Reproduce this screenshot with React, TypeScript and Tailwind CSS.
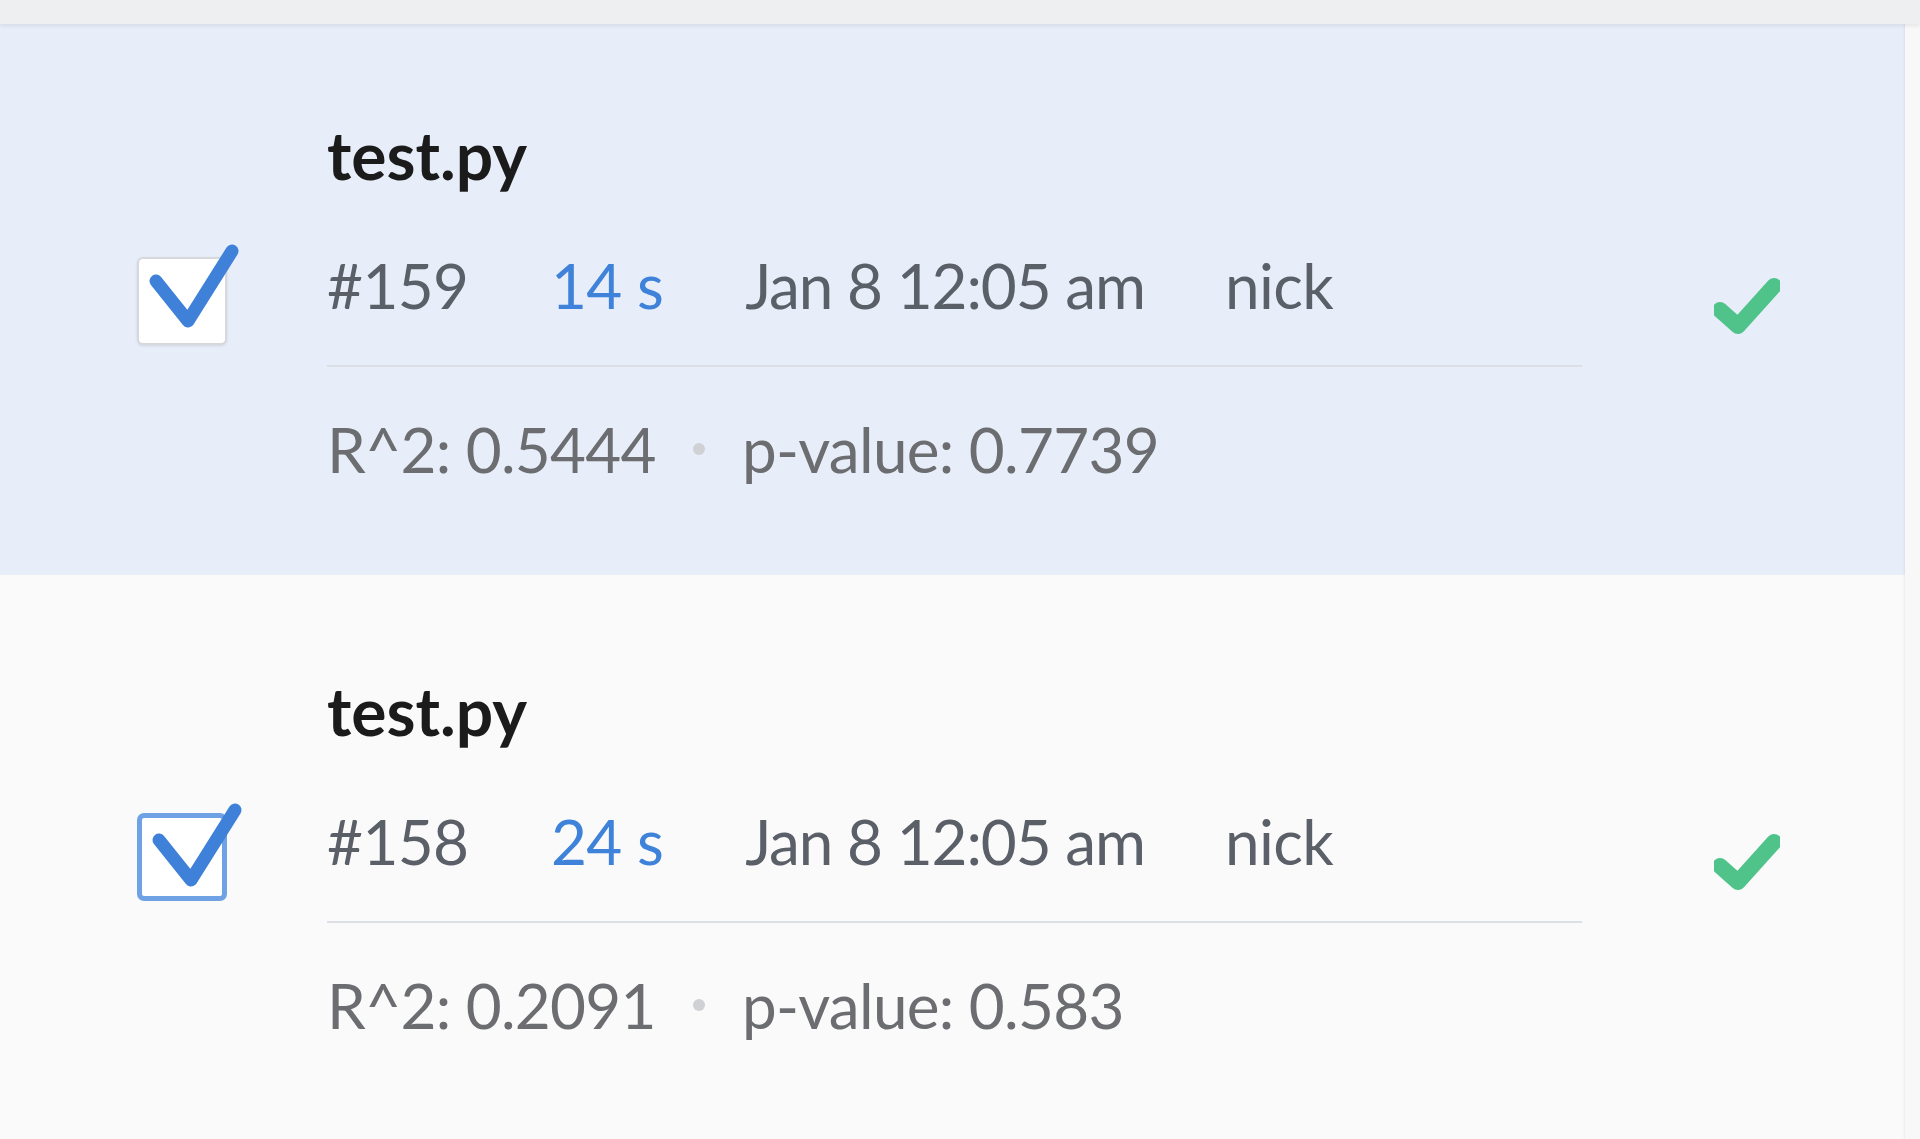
import React from 'react';

type Run = {
  file: string;
  num: number;
  duration: string;
  date: string;
  user: string;
  r2: string;
  pValue: string;
  selected: boolean;
};

const runs: Run[] = [
  { file: 'test.py', num: 159, duration: '14 s', date: 'Jan 8 12:05 am', user: 'nick', r2: '0.5444', pValue: '0.7739', selected: true },
  { file: 'test.py', num: 158, duration: '24 s', date: 'Jan 8 12:05 am', user: 'nick', r2: '0.2091', pValue: '0.583', selected: false },
];

function CheckBox({ active }: { active: boolean }) {
  return (
    <div
      className={
        active
          ? 'relative w-[90px] h-[88px] rounded-[6px] bg-white border-2 border-[#d6d8dc] shadow-[0_1px_3px_rgba(0,0,0,0.1)]'
          : 'relative w-[90px] h-[88px] rounded-[7px] bg-white border-[5px] border-[#6ea2e4]'
      }
    >
      <svg
        className="absolute -left-[2px] -top-[2px] overflow-visible"
        width="88"
        height="88"
        viewBox="0 0 88 88"
        fill="none"
      >
        <polyline
          points="19,24 51,64 95,-6"
          stroke="#3f80d8"
          strokeWidth="13"
          strokeLinecap="round"
          strokeLinejoin="round"
        />
      </svg>
    </div>
  );
}

function GreenCheck() {
  return (
    <svg width="66" height="58" viewBox="0 0 66 58" fill="none">
      <polyline
        points="6,33 24,49 60,9"
        stroke="#4fc38a"
        strokeWidth="16"
        strokeLinecap="round"
        strokeLinejoin="round"
      />
    </svg>
  );
}

function RunRow({ run, first }: { run: Run; first: boolean }) {
  return (
    <div
      className={
        (first ? 'bg-[#e8eef9] pt-[98px] pb-[95px]' : 'bg-[#fafafa] pt-[103px] pb-[95px]') +
        ' grid grid-cols-[90px_1255px_1fr] gap-x-[100px] pl-[137px]'
      }
    >
      {/* title */}
      <div />
      <div className="text-[66px] leading-[66px] font-bold text-[#1b1b1b]">{run.file}</div>
      <div />

      {/* meta */}
      <div className="self-start mt-[69px]">
        <CheckBox active={run.selected} />
      </div>
      <div className="mt-[37px] flex items-center text-[62px] leading-[62px] text-[#5a5f68] tracking-[-0.6px]">
        <span className="w-[142px] mr-[82px]">#{run.num}</span>
        <span className="text-[#3f82d9] mr-[82px]">{run.duration}</span>
        <span className="mr-[80px] tracking-[-1.1px]">{run.date}</span>
        <span>{run.user}</span>
      </div>
      <div className="self-start mt-[89px] ml-[32px]">
        <GreenCheck />
      </div>

      {/* divider */}
      <div />
      <div className="mt-[20px] h-[2px] bg-[#dcdfe4]" />
      <div />

      {/* stats */}
      <div />
      <div className="mt-[51px] flex items-center text-[62px] leading-[62px] text-[#6c6d70] tracking-[-0.7px]">
        <span>R^2: {run.r2}</span>
        <span className="mx-[37px] w-[12px] h-[12px] rounded-full bg-[#cfd1d4]" />
        <span>p-value: {run.pValue}</span>
      </div>
      <div />
    </div>
  );
}

export default function App() {
  return (
    <div className="w-[1920px] h-[1139px] overflow-hidden flex flex-col bg-[#fafafa] font-['Lato',sans-serif]">
      <div className="relative z-10 h-[24px] shrink-0 bg-[#eeeff1] shadow-[0_2px_4px_rgba(0,0,0,0.08)]" />
      <div className="flex flex-1 min-h-0">
        <div className="flex-1 flex flex-col">
          {runs.map((run, i) => (
            <RunRow key={run.num} run={run} first={i === 0} />
          ))}
        </div>
        <div className="w-[15px] shrink-0 bg-[#f8f8f9] shadow-[-1px_0_2px_rgba(0,0,0,0.06)]" />
      </div>
    </div>
  );
}
